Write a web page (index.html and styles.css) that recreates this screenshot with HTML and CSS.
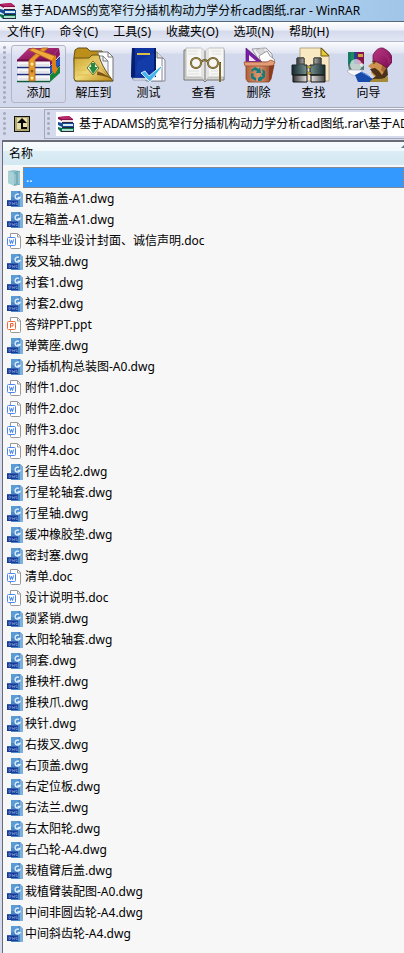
FILE: index.html
```html
<!DOCTYPE html>
<html lang="zh-CN">
<head>
    <meta charset="UTF-8">
    <meta name="viewport" content="width=device-width, initial-scale=1.0">
    <title>基于ADAMS的宽窄行分插机构动力学分析cad图纸.rar - WinRAR</title>
    <link rel="stylesheet" href="styles.css">
</head>
<body>
    <!-- shared icons -->
    <svg class="defs" aria-hidden="true">
        <symbol id="rar" viewBox="0 0 16 16">
            <path d="M0 1l11-1 4 3v2H4L0 3z" fill="#8d1049"/><path d="M1 1l10-1 3 3H4z" fill="#b9266a"/>
            <path d="M4 4h11v2H4z" fill="#f1dfe6"/>
            <path d="M0 6l4 1h12v4H4L0 9z" fill="#174b95"/><path d="M5 8h10v2H5z" fill="#d5ebf5"/>
            <path d="M0 11l4 1h12v4H3l-3-3z" fill="#08714f"/><path d="M4 13h11v2H4z" fill="#a9dfc9"/>
            <path d="M4 6h11v1H4zM4 11h12v1H4zM3 15h13v1H3z" fill="#26263a"/>
        </symbol>
        <symbol id="dwg" viewBox="0 0 16 16">
            <path d="M4 0h9l3 3v13H4z" fill="#4a88c8"/><path d="M4 0h8l-5 6H4z" fill="#5b9bd6"/>
            <path d="M13 0l3 3v13h-3z" fill="#7fb0dc"/>
            <path d="M12 3.500a2.500 2.500 0 1 0 1 3h-2.500" fill="none" stroke="#d9ecfb" stroke-width="1.500"/>
            <path d="M0 9h11v6H0z" fill="#173b96"/><path d="M0 9h11v1H0z" fill="#3560b0"/>
            <path d="M2 11v2.500h1l.7-.6v-1.200L3 11zM5 11l.7 2.500.8-1.500.8 1.500L8 11M10.500 11.300H9v2.200h1.500v-1" fill="none" stroke="#7c9fdc" stroke-width=".7"/>
        </symbol>
        <symbol id="doc" viewBox="0 0 16 16">
            <path d="M3.500 4V.500h7l3 3v11q0 1-1 1h-8q-1 0-1-1V12" fill="#fff" stroke="#999"/><path d="M10.500 1v3h3" fill="none" stroke="#999"/>
            <rect x=".5" y="4.500" width="8" height="8" rx="1" fill="#fff" stroke="#4c87ed"/>
            <path d="M2.500 6.500l1 4 1-3 1 3 1-4" fill="none" stroke="#3f7eea"/>
        </symbol>
        <symbol id="ppt" viewBox="0 0 16 16">
            <path d="M3.500 4V.500h7l3 3v11q0 1-1 1h-8q-1 0-1-1V12" fill="#fff" stroke="#999"/><path d="M10.500 1v3h3" fill="none" stroke="#999"/>
            <rect x=".5" y="4.500" width="8" height="8" rx="1" fill="#fff" stroke="#f16a3d"/>
            <path d="M3.500 11V6.500h2.500v2.500h-2" fill="none" stroke="#ee602f"/>
        </symbol>
        <symbol id="folder" viewBox="0 0 16 16">
            <path d="M1 1l6-1 6 1v14H7l-6-2z" fill="#8fc1cb"/><path d="M1 1l6 2v13l-6-3z" fill="#a9d2d8"/>
            <path d="M7 3l2-2h4v13l-2 1-4 1z" fill="#76adba"/><path d="M8 4v10M12 2v12" stroke="#b5d8dd"/>
        </symbol>
        <linearGradient id="gold" x2="1" y2="1"><stop stop-color="#c39c26"/><stop offset=".5" stop-color="#f0d878"/><stop offset="1" stop-color="#b98610"/></linearGradient>
        <linearGradient id="steel"><stop stop-color="#15282c"/><stop offset=".5" stop-color="#7f9c9b"/><stop offset="1" stop-color="#192a2d"/></linearGradient>
        <linearGradient id="metal"><stop stop-color="#333"/><stop offset=".5" stop-color="#fff"/><stop offset="1" stop-color="#444"/></linearGradient>
        <linearGradient id="clay"><stop stop-color="#b06038"/><stop offset=".45" stop-color="#dc9870"/><stop offset="1" stop-color="#8a3a20"/></linearGradient>
        <linearGradient id="purple" x2="1" y2="1"><stop stop-color="#bd3a84"/><stop offset="1" stop-color="#78084e"/></linearGradient>
    </svg>

    <header class="title-bar">
        <svg class="icon"><use href="#rar"/></svg>
        <h1>基于ADAMS的宽窄行分插机构动力学分析cad图纸.rar - WinRAR</h1>
    </header>

    <nav class="menu">
        <button>文件(F)</button>
        <button>命令(C)</button>
        <button>工具(S)</button>
        <button>收藏夹(O)</button>
        <button>选项(N)</button>
        <button>帮助(H)</button>
    </nav>

    <div class="toolbar">
        <button class="tool active">
            <svg viewBox="0 0 46 36">
                <path d="M1 13L13 1h30L34 13z" fill="url(#purple)"/><path d="M34 13L43 1l1 7-10 11z" fill="#8d1661"/>
                <path d="M34 20l10-10v8L34 27z" fill="#2456bd"/><path d="M34 28l10-9v7L34 35z" fill="#17833b"/>
                <path d="M2 14h32v6H2zM2 21h32v6H2zM2 28h32v6H2z" fill="#f6f6f8"/>
                <path d="M3 18h30M3 25h30M3 32h30" stroke="#d0d2d9"/>
                <path d="M34 13.500H1" stroke="#6b0b46" stroke-width="2"/><path d="M34 20.500H1" stroke="#1d2f78" stroke-width="1.500"/><path d="M34 27.500H1" stroke="#1d2f78" stroke-width="1.500"/><path d="M34 34.500H1" stroke="#0f5a38" stroke-width="1.500"/>
                <path d="M34 20l10-10M34 27l10-9" stroke="#252a45"/>
                <path d="M13 13L26 1h6L19 13v21h-6z" fill="#e99a2d" stroke="#a8611b" stroke-width=".8"/>
                <path d="M13 3l4-2 22 8-3 5z" fill="#f0a93c" stroke="#a8611b" stroke-width=".8"/>
                <path d="M36 12l4-4v11l2 3-3 5-3-3z" fill="#dc8219"/>
                <circle cx="16" cy="17" r="1.500" fill="#fff49b"/><circle cx="16" cy="24" r="1.500" fill="#8e5b13"/><circle cx="16" cy="31" r="1.500" fill="#fff49b"/>
            </svg>
            <span>添加</span>
        </button>
        <button class="tool">
            <svg viewBox="0 0 46 36">
                <path d="M3 10L4 3l3-2h9l3 3h12l2 4v26H4z" fill="#bb8f1a" stroke="#665016"/>
                <path d="M27 5h10l5 5v24H28z" fill="#fff" stroke="#75777b"/><path d="M22 9h10l5 5v18H24z" fill="#eef2fa" stroke="#888"/>
                <path d="M37 5v5h5M32 9v5h5" fill="none" stroke="#777"/>
                <path d="M3 11h15l3-3h7q1 9 14 26H5l-2-2z" fill="url(#gold)" stroke="#695317"/>
                <path d="M28 9q-3 11 14 24-6-4-16-5z" fill="#7b5314"/><path d="M28 9q-8 6-5 15 8 0 19 9Q27 23 28 9z" fill="#e3bf66"/>
                <path d="M22 14l6 7-6 7-6-7z" fill="#eef5cf" stroke="#756d27"/><path d="M18 20h2v-4h4v4h3l-5 7z" fill="#278b43"/>
                <path d="M6 14h11M6 18h10M6 23h9M6 28h12" stroke="#dfbd4b"/>
            </svg>
            <span>解压到</span>
        </button>
        <button class="tool">
            <svg viewBox="0 0 46 36">
                <path d="M25 8h9l5 5v21H22z" fill="#f7f7fc" stroke="#858891"/><path d="M20 5h11l5 5v24H20z" fill="#fff" stroke="#85899a"/>
                <path d="M31 5v6h6" fill="#ddd" stroke="#777"/>
                <path d="M6 1h24v29l-23 2-2-2z" fill="#0e32a0"/><path d="M6 1h3v29H5z" fill="#061e6e"/><path d="M28 1h2v29h-2z" fill="#071d66"/>
                <path d="M7 31h18v2H7z" fill="#eceff6" stroke="#656b81" stroke-width=".5"/>
                <path d="M11 7h13" stroke="#d9bd46" stroke-width="2"/><path d="M11 15l17-9v16L10 28z" fill="#265ac2" opacity=".25"/>
                <path d="M15 26l4-2 4 5 12-10 1 1-12 15z" fill="#42b6ed" stroke="#fff" stroke-width=".8"/>
            </svg>
            <span>测试</span>
        </button>
        <button class="tool">
            <svg viewBox="0 0 46 36">
                <path d="M3 3h19l2 3 2-3h17v30H26l-2 2-2-2H3z" fill="#d3d3d2" stroke="#777"/>
                <path d="M5 1h15l4 3v29l-4-3H5zM43 1H28l-4 3v29l4-3h15z" fill="#f6f6f5" stroke="#aaa" stroke-width=".7"/>
                <path d="M20 1v28l4 4V4zM28 1v28l-4 4V4z" fill="#e3e3e3"/><path d="M24 4v29" stroke="#777"/>
                <path d="M7 4h10M7 7h9M30 4h10M31 7h9M7 24h11M30 24h7M7 27h11M30 27h7" stroke="#dedede"/>
                <g fill="none" stroke="#4a4020" stroke-width="2"><circle cx="15" cy="16" r="5"/><circle cx="32" cy="16" r="5"/><path d="M20 15q4-4 7 0M37 16h2v19"/></g>
                <g fill="none" stroke="#cba94b" stroke-width=".8"><circle cx="15" cy="16" r="5"/><circle cx="32" cy="16" r="5"/><path d="M20 15q4-4 7 0M37 16h2v19"/></g>
            </svg>
            <span>查看</span>
        </button>
        <button class="tool">
            <svg viewBox="0 0 46 36">
                <path d="M16 2l14-1 6 6 1 8H24z" fill="#eeeef1" stroke="#888" stroke-width=".8"/>
                <path d="M20 3l6-2 9 12-4 3z" fill="#d6d6dc" stroke="#aaa" stroke-width=".5"/><path d="M23 9l8-5 3 5 5 4-2 2H25z" fill="#fff" stroke="#777" stroke-width=".7"/>
                <path d="M10 1l17 15H10z" fill="#7a1fa5" stroke="#50146e" stroke-width=".7"/><path d="M13 8l7 6h-7z" fill="#f3eaf9"/>
                <path d="M10 18h28l-3 14-2 3H12l-2-3z" fill="url(#clay)" stroke="#8a4527" stroke-width=".8"/><path d="M8 15h23l4-2 4 2-2 4H9z" fill="#e29c76" stroke="#985032" stroke-width=".8"/>
                <path d="M33 19l5-1-3 14-2 2z" fill="#8a3b22"/>
                <path d="M15 23l4-3 4 2 1-2 1 6h-5l1-2-3-1-2 2zM26 22l3 2v6l-2 2-1-4-1-1 2-1zM15 26l3 1-1 2 3 2v3l-5-3zM22 31l3-2v1h3l-3 4h-3z" fill="#137c7f"/>
            </svg>
            <span>删除</span>
        </button>
        <button class="tool">
            <svg viewBox="0 0 46 36">
                <path d="M9 1h22l7 7v26H9z" fill="#f8e9c3" stroke="#a8946c" stroke-width=".8"/><path d="M30 1v8h8z" fill="#e6c935" stroke="#6d5a19"/>
                <path d="M6 11h7v7h3v10H1V18h5zM23 11h7v7h4v10H19V18h4z" fill="url(#steel)" stroke="#162124"/>
                <path d="M6 11h7v6H6zM23 11h7v6h-7z" fill="url(#metal)" stroke="#444"/>
                <path d="M2 28h14v7H2zM20 28h14v7H20z" fill="url(#metal)" stroke="#111"/><path d="M16 19h4v2h-4zM16 25h4v2h-4z" fill="#e1cc3c" stroke="#222" stroke-width=".5"/>
                <path d="M2 28h14M20 28h14" stroke="#252925" stroke-width="1.500"/>
            </svg>
            <span>查找</span>
        </button>
        <button class="tool">
            <svg viewBox="0 0 46 36">
                <path d="M2 5h3v14H2z" fill="#16796a"/><path d="M5 5h3v14H5z" fill="#1d9154"/><path d="M8 5h3v14H8z" fill="#273e9e"/><path d="M11 5h7v14h-7z" fill="#84174a"/><path d="M12 7h5v3h-5z" fill="#cba63b"/>
                <path d="M2 17h16v6H3z" fill="#527c70"/><circle cx="10" cy="18" r="6" fill="#fff" opacity=".65"/>
                <path d="M16 16v4M14 18h4" stroke="#fff"/>
                <path d="M1 24q2-2 7-1h9l-3 4-5 2-5-2z" fill="#f7f7fb" stroke="#aaa9b5" stroke-width=".7"/>
                <path d="M9 28l6-3q9 5 17 10H12z" fill="#174bac"/><path d="M15 25q6 2 9 5" fill="none" stroke="#437fd3"/>
                <path d="M28 11l9 4 2 14-8 3-6-6 2-3-5-4 4-3z" fill="#cf934f"/><path d="M37 15l4 2-2 10-4-4z" fill="#a36834"/>
                <path d="M26 14l4 1M27 16h2" stroke="#402417"/>
                <path d="M24 22l5-1 4 3 3 4 5-8 1 8-5 5-11-1 4-3-4-4z" fill="#4b3118"/>
                <path d="M27 8Q31 0 37 1q9 4 10 13l-6 7q-5-4-14-8z" fill="url(#purple)" stroke="#58073d" stroke-width=".7"/>
                <path d="M29 8q9-4 16 7M35 3q8 4 8 14" fill="none" stroke="#a62d75"/>
                <path d="M24 34q3-3 8-2 7 0 10-3v6H24z" fill="#a58b38"/>
            </svg>
            <span>向导</span>
        </button>
    </div>

    <div class="address-bar">
        <div class="up-pane">
            <button class="up" aria-label="向上">
                <svg viewBox="0 0 16 16"><path d="M0 0h16v16H0z" fill="#111"/><path d="M1 1h14v14H1z" fill="#b1a773"/><path d="M3 2h10v11H3z" fill="#e5dea9"/><path d="M8 2l5 5H9v4h4v2H7V7H3z" fill="#080808"/></svg>
            </button>
        </div>
        <div class="path-pane">
            <label class="path">
                <svg class="icon"><use href="#rar"/></svg>
                <input type="text" aria-label="路径" value="基于ADAMS的宽窄行分插机构动力学分析cad图纸.rar\基于ADAMS的宽窄行分插机构动力学分析cad图纸">
            </label>
        </div>
    </div>

    <main class="list">
        <table>
            <thead>
                <tr><th>名称<svg class="sort" viewBox="0 0 8 4"><path d="M0 4l4-4 4 4z" fill="#557b94"/></svg></th></tr>
            </thead>
            <tbody>
                <tr class="selected"><td><div class="file"><svg class="icon"><use href="#folder"/></svg><span>..</span></div></td></tr>
                <tr><td><div class="file"><svg class="icon"><use href="#dwg"/></svg><span>R右箱盖-A1.dwg</span></div></td></tr>
                <tr><td><div class="file"><svg class="icon"><use href="#dwg"/></svg><span>R左箱盖-A1.dwg</span></div></td></tr>
                <tr><td><div class="file"><svg class="icon"><use href="#doc"/></svg><span>本科毕业设计封面、诚信声明.doc</span></div></td></tr>
                <tr><td><div class="file"><svg class="icon"><use href="#dwg"/></svg><span>拨叉轴.dwg</span></div></td></tr>
                <tr><td><div class="file"><svg class="icon"><use href="#dwg"/></svg><span>衬套1.dwg</span></div></td></tr>
                <tr><td><div class="file"><svg class="icon"><use href="#dwg"/></svg><span>衬套2.dwg</span></div></td></tr>
                <tr><td><div class="file"><svg class="icon"><use href="#ppt"/></svg><span>答辩PPT.ppt</span></div></td></tr>
                <tr><td><div class="file"><svg class="icon"><use href="#dwg"/></svg><span>弹簧座.dwg</span></div></td></tr>
                <tr><td><div class="file"><svg class="icon"><use href="#dwg"/></svg><span>分插机构总装图-A0.dwg</span></div></td></tr>
                <tr><td><div class="file"><svg class="icon"><use href="#doc"/></svg><span>附件1.doc</span></div></td></tr>
                <tr><td><div class="file"><svg class="icon"><use href="#doc"/></svg><span>附件2.doc</span></div></td></tr>
                <tr><td><div class="file"><svg class="icon"><use href="#doc"/></svg><span>附件3.doc</span></div></td></tr>
                <tr><td><div class="file"><svg class="icon"><use href="#doc"/></svg><span>附件4.doc</span></div></td></tr>
                <tr><td><div class="file"><svg class="icon"><use href="#dwg"/></svg><span>行星齿轮2.dwg</span></div></td></tr>
                <tr><td><div class="file"><svg class="icon"><use href="#dwg"/></svg><span>行星轮轴套.dwg</span></div></td></tr>
                <tr><td><div class="file"><svg class="icon"><use href="#dwg"/></svg><span>行星轴.dwg</span></div></td></tr>
                <tr><td><div class="file"><svg class="icon"><use href="#dwg"/></svg><span>缓冲橡胶垫.dwg</span></div></td></tr>
                <tr><td><div class="file"><svg class="icon"><use href="#dwg"/></svg><span>密封塞.dwg</span></div></td></tr>
                <tr><td><div class="file"><svg class="icon"><use href="#doc"/></svg><span>清单.doc</span></div></td></tr>
                <tr><td><div class="file"><svg class="icon"><use href="#doc"/></svg><span>设计说明书.doc</span></div></td></tr>
                <tr><td><div class="file"><svg class="icon"><use href="#dwg"/></svg><span>锁紧销.dwg</span></div></td></tr>
                <tr><td><div class="file"><svg class="icon"><use href="#dwg"/></svg><span>太阳轮轴套.dwg</span></div></td></tr>
                <tr><td><div class="file"><svg class="icon"><use href="#dwg"/></svg><span>铜套.dwg</span></div></td></tr>
                <tr><td><div class="file"><svg class="icon"><use href="#dwg"/></svg><span>推秧杆.dwg</span></div></td></tr>
                <tr><td><div class="file"><svg class="icon"><use href="#dwg"/></svg><span>推秧爪.dwg</span></div></td></tr>
                <tr><td><div class="file"><svg class="icon"><use href="#dwg"/></svg><span>秧针.dwg</span></div></td></tr>
                <tr><td><div class="file"><svg class="icon"><use href="#dwg"/></svg><span>右拨叉.dwg</span></div></td></tr>
                <tr><td><div class="file"><svg class="icon"><use href="#dwg"/></svg><span>右顶盖.dwg</span></div></td></tr>
                <tr><td><div class="file"><svg class="icon"><use href="#dwg"/></svg><span>右定位板.dwg</span></div></td></tr>
                <tr><td><div class="file"><svg class="icon"><use href="#dwg"/></svg><span>右法兰.dwg</span></div></td></tr>
                <tr><td><div class="file"><svg class="icon"><use href="#dwg"/></svg><span>右太阳轮.dwg</span></div></td></tr>
                <tr><td><div class="file"><svg class="icon"><use href="#dwg"/></svg><span>右凸轮-A4.dwg</span></div></td></tr>
                <tr><td><div class="file"><svg class="icon"><use href="#dwg"/></svg><span>栽植臂后盖.dwg</span></div></td></tr>
                <tr><td><div class="file"><svg class="icon"><use href="#dwg"/></svg><span>栽植臂装配图-A0.dwg</span></div></td></tr>
                <tr><td><div class="file"><svg class="icon"><use href="#dwg"/></svg><span>中间非圆齿轮-A4.dwg</span></div></td></tr>
                <tr><td><div class="file"><svg class="icon"><use href="#dwg"/></svg><span>中间斜齿轮-A4.dwg</span></div></td></tr>
            </tbody>
        </table>
    </main>
</body>
</html>
```

FILE: styles.css
```css
* { box-sizing: border-box; }
body { margin: 0; min-height: 100vh; display: flex; flex-direction: column; overflow-x: hidden; background: #d5daed; color: #000; font-family: "Noto Sans", "Noto Sans CJK SC", sans-serif; font-size: 12px; line-height: 20px; white-space: nowrap; }
button, input { font: inherit; color: inherit; padding: 0; border: 0; background: none; }
svg { display: block; flex: none; }
.defs { position: absolute; width: 0; height: 0; }
.icon { width: 16px; height: 16px; }

.title-bar { display: flex; align-items: center; gap: 5px; height: 22px; border-bottom: 1px solid #56667b; background: linear-gradient(90deg, #e4f0fa, #c3dcf2 45%, #9fc5e8); overflow: hidden; }
.title-bar h1 { margin: 0; font-size: 12px; font-weight: normal; }

.menu { display: flex; gap: 15px; height: 20px; padding: 0 7px; background: linear-gradient(#fff, #eef0f8 40%, #d5daec 50%, #e2e6f4); border-bottom: 1px solid #b4b8cb; }

.toolbar { display: flex; height: 66px; padding: 3px 0 4px 6px; border-bottom: 1px solid #a5a9b8; background: linear-gradient(#fafbfe, #e1e5f2 11px, #d3d9ec 12px); overflow: hidden; }
.toolbar::before, .up-pane::before, .path-pane::before { content: ""; flex: none; width: 3px; margin-left: -3px; background: radial-gradient(circle, #a8adbd 1px, transparent 2px) 0 0 / 3px 5px; }
.tool { display: flex; flex-direction: column; align-items: center; flex: none; width: 55px; height: 58px; border: 1px solid transparent; border-radius: 3px; }
.toolbar .tool:first-of-type { margin-left: 5px; }
.tool svg { width: 46px; height: 36px; margin-top: 1px; }
.tool.active { border-color: #b3b6c6; background: linear-gradient(#eceef6, #d9def0 11px, #d3d8ea); }

.address-bar { display: flex; height: 32px; border-top: 1px solid #f4f5fb; }
.up-pane { display: flex; align-items: center; width: 45px; height: 30px; flex: none; padding-left: 6px; border-right: 1px solid #a4a8b8; }
.up-pane::before, .path-pane::before { height: 26px; }
.up { margin-left: 8px; }
.up svg { width: 16px; height: 16px; }
.path-pane { display: flex; align-items: center; flex: 1; min-width: 0; height: 30px; padding-left: 5px; border-top: 1px solid #a4a8b8; border-bottom: 1px solid #a4a8b8; }
.path { display: flex; align-items: center; gap: 5px; flex: 1; min-width: 0; height: 24px; margin-left: 6px; padding-left: 2px; background: #fff; }
.path input { flex: 1; min-width: 0; outline: 0; }

.list { flex: 1; margin-left: 2px; border-top: 2px solid #696c76; border-left: 1px solid #696c76; background: #f7f7f7; overflow: hidden; }
table { width: 100%; border-collapse: collapse; }
th, td { padding: 0; text-align: left; font-weight: normal; }
th { position: relative; height: 24px; padding-left: 6px; background: linear-gradient(#f7fcfe, #eff8fc 40%, #dcedf5 41%, #d3e8f1); border-bottom: 2px solid #f5f8fa; }
.sort { position: absolute; top: 2px; right: -5px; width: 8px; height: 4px; }
td { height: 21px; }
.file { display: flex; align-items: center; height: 21px; padding-left: 4px; }
.file span { padding: 0 2px; }
.selected .file span { flex: 1; height: 21px; border: 1px dotted #c97835; background: #39f; color: #fff; }
```
